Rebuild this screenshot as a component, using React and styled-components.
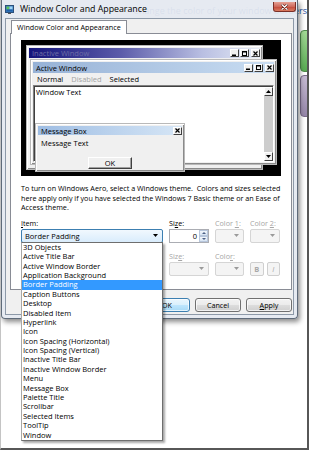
import React from 'react';
import styled, { createGlobalStyle } from 'styled-components';

const UI = `"Open Sans", "Noto Sans", "DejaVu Sans", sans-serif`;

const ITEMS = [
  '3D Objects',
  'Active Title Bar',
  'Active Window Border',
  'Application Background',
  'Border Padding',
  'Caption Buttons',
  'Desktop',
  'Disabled Item',
  'Hyperlink',
  'Icon',
  'Icon Spacing (Horizontal)',
  'Icon Spacing (Vertical)',
  'Inactive Title Bar',
  'Inactive Window Border',
  'Menu',
  'Message Box',
  'Palette Title',
  'Scrollbar',
  'Selected Items',
  'ToolTip',
  'Window',
];

const GlobalStyle = createGlobalStyle`
  html, body {
    margin: 0;
    padding: 0;
    background: #ffffff;
  }
  body {
    font-family: ${UI};
    width: 312px;
    height: 452px;
    overflow: hidden;
    color: #000;
  }
  * {
    box-sizing: border-box;
  }
`;

/* picture frame round the screenshot */
const Frame = styled.div`
  position: relative;
  width: 309px;
  height: 450px;
  overflow: hidden;
  background: #ffffff;
  border-left: 1px solid #c4c4c4;
  border-right: 2px solid #575757;
  border-bottom: 2px solid #575757;
`;

/* control panel page behind the dialog */
const Backdrop = styled.div`
  display: flex;
  flex-direction: column;
  padding-top: 5px;
`;

const PageHeading = styled.div`
  font-size: 9px;
  line-height: 12px;
  color: #1d4c9c;
  text-align: right;
  white-space: nowrap;
`;

const Swatches = styled.div`
  display: grid;
  grid-template-columns: 42px;
  grid-auto-rows: 42px;
  row-gap: 3px;
  margin-top: 13px;
  padding-left: 299px;
`;

const Swatch = styled.div`
  border-radius: 4px;
  border: 1px solid ${(p) => p.$edge};
  background: linear-gradient(160deg, ${(p) => p.$light}, ${(p) => p.$dark});
`;

/* the dialog window */
const Dialog = styled.div`
  position: absolute;
  top: 0;
  left: 0;
  width: 297px;
  display: flex;
  flex-direction: column;
  padding: 0 3px 3px;
  background: rgba(228, 233, 240, 0.94);
  border: 1px solid #5f6b7a;
  border-top: none;
  border-radius: 0 0 4px 4px;
  box-shadow: 2px 3px 5px rgba(0, 0, 0, 0.45);
`;

const TitleBar = styled.div`
  height: 18px;
  display: flex;
  align-items: center;
`;

const TitleIcon = styled.svg`
  width: 9px;
  height: 9px;
  margin-right: 6px;
  flex: none;
`;

const TitleText = styled.div`
  font-size: 8.8px;
  color: #000;
  white-space: nowrap;
`;

const CloseButton = styled.div`
  align-self: flex-start;
  margin: 2px -2px 0 auto;
  width: 23px;
  height: 10px;
  border: 1px solid #7b2f27;
  border-top: none;
  border-radius: 0 0 3px 3px;
  background: linear-gradient(#e6a195, #cf6a5c 50%, #c2483a 51%, #d97a60);
  display: flex;
  align-items: center;
  justify-content: center;
`;

const Client = styled.div`
  background: #f0f0f0;
  border: 1px solid #8d99a8;
  padding: 1px 1px 2px 4px;
  display: flex;
  flex-direction: column;
`;

const TabStrip = styled.div`
  display: flex;
  padding-left: 1px;
`;

const Tab = styled.div`
  position: relative;
  z-index: 1;
  height: 14px;
  margin-bottom: -1px;
  padding: 0 5px;
  border: 1px solid #898c95;
  border-bottom: none;
  background: #ffffff;
  font-size: 7.2px;
  line-height: 13px;
  white-space: nowrap;
`;

const Panel = styled.div`
  border: 1px solid #898c95;
  background: #ffffff;
  padding: 6px 10px 13px;
`;

/* appearance preview: windows on a black desktop */
const Preview = styled.div`
  position: relative;
  height: 136px;
  background: #000000;
`;

const PreviewWindow = styled.div`
  position: absolute;
  display: flex;
  flex-direction: column;
  padding: 2px;
  background: #f0f0f0;
  border: 1px solid #b9b9b9;
  box-shadow: inset 1px 1px 0 #ffffff, inset -1px -1px 0 #8a8a8a;
`;

const InactiveWindow = styled(PreviewWindow)`
  left: 5px;
  top: 5px;
  width: 237px;
  height: 125px;
`;

const ActiveWindow = styled(PreviewWindow)`
  left: 9px;
  top: 19px;
  width: 247px;
  height: 106px;
`;

const MessageWindow = styled(PreviewWindow)`
  left: 14px;
  top: 83px;
  width: 150px;
  height: 49px;
`;

const Caption = styled.div`
  height: ${(p) => p.$h}px;
  flex: none;
  display: flex;
  align-items: center;
  padding-left: 3px;
  background: ${(p) => p.$bg};
  color: ${(p) => p.$color};
  font-size: 7.5px;
  white-space: nowrap;
`;

const CapButtons = styled.div`
  margin-left: auto;
  display: flex;
  gap: 1px;
`;

const CapButton = styled.div`
  width: 9px;
  height: 8px;
  margin-left: ${(p) => (p.$gap ? 1 : 0)}px;
  background: #f0f0f0;
  border: 1px solid;
  border-color: #ffffff #404040 #404040 #ffffff;
  display: flex;
  align-items: center;
  justify-content: center;
`;

const MenuBar = styled.div`
  height: 12px;
  flex: none;
  display: flex;
  align-items: center;
  font-size: 7.5px;
`;

const MenuItem = styled.span`
  padding: 0 4px;
  color: ${(p) => (p.$disabled ? '#a3a3a3' : '#000')};
`;

const TextArea = styled.div`
  flex: 1;
  display: flex;
  background: #ffffff;
  border: 1px solid;
  border-color: #808080 #ffffff #ffffff #808080;
  box-shadow: inset 1px 1px 0 #404040;
`;

const TextBody = styled.div`
  flex: 1;
  padding: 2px 2px;
  font-size: 7.5px;
  line-height: 9px;
`;

const ScrollBar = styled.div`
  width: 9px;
  margin: 1px 0 0;
  display: flex;
  flex-direction: column;
  justify-content: space-between;
  background: #cdcdcd;
`;

const ScrollButton = styled(CapButton)`
  height: 9px;
`;

const MessageBody = styled.div`
  flex: 1;
  display: flex;
  flex-direction: column;
  padding: 4px 3px 0;
  font-size: 7.5px;
`;

const MessageText = styled.div`
  line-height: 8px;
`;

const ClassicButton = styled.div`
  align-self: center;
  width: 44px;
  height: 12px;
  margin-top: 10px;
  background: #f0f0f0;
  border: 1px solid;
  border-color: #ffffff #404040 #404040 #ffffff;
  box-shadow: inset -1px -1px 0 #a0a0a0;
  text-align: center;
  font-size: 7.5px;
  line-height: 10px;
`;

/* text and controls under the preview */
const Note = styled.p`
  margin: 8px 0 0;
  font-size: 7.2px;
  line-height: 9.6px;
  white-space: nowrap;
`;

const Fields = styled.div`
  margin-top: 5px;
  display: grid;
  grid-template-columns: 142px 40px 29px 30px;
  column-gap: 6px;
  row-gap: 8px;
`;

const Field = styled.div`
  position: relative;
  display: flex;
  flex-direction: column;
`;

const Label = styled.div`
  height: 10px;
  margin-bottom: 1px;
  font-size: 7.2px;
  line-height: 10px;
  white-space: nowrap;
  color: ${(p) => (p.$disabled ? '#a6a6a6' : '#000')};
`;

const Key = styled.span`
  text-decoration: underline;
`;

const Combo = styled.div`
  height: 14px;
  display: flex;
  align-items: center;
  padding: 0 4px 0 3px;
  border-radius: 2px;
  font-size: 7.5px;
  white-space: nowrap;
  border: 1px solid ${(p) => (p.$active ? '#3c7fb1' : '#d5d5d5')};
  background: ${(p) =>
    p.$active ? 'linear-gradient(#f1f8fe, #d9ecfc)' : '#f4f4f4'};
`;

const Arrow = styled.svg`
  margin-left: auto;
  width: 5px;
  height: 3px;
  flex: none;
`;

const Spinner = styled.div`
  height: 14px;
  display: flex;
  border: 1px solid #abadb3;
  background: #ffffff;
`;

const SpinValue = styled.div`
  flex: 1;
  text-align: right;
  padding-right: 2px;
  font-size: 7.5px;
  line-height: 12px;
`;

const SpinButtons = styled.div`
  width: 9px;
  display: flex;
  flex-direction: column;
`;

const SpinButton = styled.div`
  flex: 1;
  display: flex;
  align-items: center;
  justify-content: center;
  border: 1px solid #b7c6dc;
  background: linear-gradient(#f3f7fc, #d7e4f3);
`;

const StyleButtons = styled.div`
  display: flex;
  gap: 3px;
  margin-top: 11px;
`;

const StyleButton = styled.div`
  width: 14px;
  height: 14px;
  border: 1px solid #cfcfcf;
  border-radius: 2px;
  background: #f4f4f4;
  color: #a8a8a8;
  font-size: 7.5px;
  line-height: 12px;
  text-align: center;
  font-weight: ${(p) => (p.$bold ? 700 : 400)};
  font-style: ${(p) => (p.$italic ? 'italic' : 'normal')};
`;

/* open drop-down of the Item combo */
const DropList = styled.div`
  position: absolute;
  z-index: 10;
  top: calc(100% - 1px);
  left: 0;
  width: 142px;
  background: #ffffff;
  border: 1px solid #6e6e6e;
  border-left-color: #a8a8a8;
  box-shadow: 2px 2px 2px rgba(0, 0, 0, 0.35);
`;

const DropItem = styled.div`
  height: 9.4px;
  padding-left: 1px;
  font-size: 7.5px;
  line-height: 9.4px;
  white-space: nowrap;
  background: ${(p) => (p.$selected ? '#3399ff' : 'transparent')};
  color: ${(p) => (p.$selected ? '#ffffff' : '#000')};
`;

const ButtonRow = styled.div`
  margin-top: 8px;
  display: flex;
  justify-content: flex-end;
  gap: 5px;
`;

const DialogButton = styled.div`
  width: 46px;
  height: 14px;
  border-radius: 3px;
  border: 1px solid ${(p) => (p.$focus ? '#3c7fb1' : '#707070')};
  background: ${(p) =>
    p.$focus
      ? 'linear-gradient(#eaf6fd, #d9f0fc 50%, #bee6fd 51%, #a7d9f5)'
      : 'linear-gradient(#f2f2f2, #ebebeb 50%, #dddddd 51%, #cfcfcf)'};
  box-shadow: inset 0 0 0 1px rgba(255, 255, 255, 0.7);
  font-size: 7.2px;
  line-height: 12px;
  text-align: center;
`;

const DownArrow = ({ color = '#000' }) => (
  <Arrow viewBox="0 0 5 3">
    <path d="M0 0h5L2.5 3z" fill={color} />
  </Arrow>
);

const Glyph = ({ kind }) => {
  if (kind === 'min') {
    return (
      <svg width="5" height="5" viewBox="0 0 5 5">
        <rect x="0" y="3.5" width="4" height="1.5" fill="#000" />
      </svg>
    );
  }
  if (kind === 'max') {
    return (
      <svg width="5" height="5" viewBox="0 0 5 5">
        <rect x="0.5" y="0.5" width="4" height="4" fill="none" stroke="#000" strokeWidth="1" />
        <rect x="0" y="0" width="5" height="1.5" fill="#000" />
      </svg>
    );
  }
  if (kind === 'up' || kind === 'down') {
    return (
      <svg width="5" height="3" viewBox="0 0 5 3">
        <path d={kind === 'up' ? 'M0 3h5L2.5 0z' : 'M0 0h5L2.5 3z'} fill="#000" />
      </svg>
    );
  }
  return (
    <svg width="5" height="5" viewBox="0 0 5 5">
      <path d="M0.5 0.5l4 4M4.5 0.5l-4 4" stroke="#000" strokeWidth="1.2" />
    </svg>
  );
};

const CaptionButtons = () => (
  <CapButtons>
    <CapButton>
      <Glyph kind="min" />
    </CapButton>
    <CapButton>
      <Glyph kind="max" />
    </CapButton>
    <CapButton $gap>
      <Glyph kind="close" />
    </CapButton>
  </CapButtons>
);

const SpinArrow = ({ up }) => (
  <svg width="4" height="2" viewBox="0 0 4 2">
    <path d={up ? 'M0 2h4L2 0z' : 'M0 0h4L2 2z'} fill="#4d6185" />
  </svg>
);

const App = () => {
  return (
    <>
      <GlobalStyle />
      <Frame>
        <Backdrop>
          <PageHeading>Change the color of your window borders</PageHeading>
          <Swatches>
            <Swatch $light="#a6dc98" $dark="#3f9b3c" $edge="#4d8a4a" />
            <Swatch $light="#c9bdd6" $dark="#85759a" $edge="#7b6c8c" />
          </Swatches>
        </Backdrop>

        <Dialog>
          <TitleBar>
            <TitleIcon viewBox="0 0 9 9">
              <rect x="0.5" y="0.5" width="8" height="7" fill="#3d7fc1" stroke="#2c4f7a" />
              <rect x="1.5" y="1.5" width="3" height="3" fill="#5fc45a" />
              <rect x="4.5" y="1.5" width="3" height="3" fill="#9fd4f6" />
              <rect x="1.5" y="4.5" width="6" height="2" fill="#1f5fa8" />
              <rect x="3" y="8" width="3" height="1" fill="#555" />
            </TitleIcon>
            <TitleText>Window Color and Appearance</TitleText>
            <CloseButton>
              <svg width="7" height="6" viewBox="0 0 7 6">
                <path
                  d="M1 0.8l5 4.4M6 0.8l-5 4.4"
                  stroke="#5a1c16"
                  strokeWidth="2.4"
                  strokeLinecap="round"
                />
                <path
                  d="M1 0.8l5 4.4M6 0.8l-5 4.4"
                  stroke="#ffffff"
                  strokeWidth="1.3"
                  strokeLinecap="round"
                />
              </svg>
            </CloseButton>
          </TitleBar>

          <Client>
            <TabStrip>
              <Tab>Window Color and Appearance</Tab>
            </TabStrip>
            <Panel>
              <Preview>
                <InactiveWindow>
                  <Caption
                    $h={10}
                    $bg="linear-gradient(90deg, #13137a, #5c5caa 40%, #b9bfe2 75%, #e6ecf6)"
                    $color="#6e6ea6"
                  >
                    Inactive Window
                    <CaptionButtons />
                  </Caption>
                </InactiveWindow>

                <ActiveWindow>
                  <Caption
                    $h={11}
                    $bg="linear-gradient(90deg, #97b2d6, #c9ddf2)"
                    $color="#000"
                  >
                    Active Window
                    <CaptionButtons />
                  </Caption>
                  <MenuBar>
                    <MenuItem>Normal</MenuItem>
                    <MenuItem $disabled>Disabled</MenuItem>
                    <MenuItem>Selected</MenuItem>
                  </MenuBar>
                  <TextArea>
                    <TextBody>Window Text</TextBody>
                    <ScrollBar>
                      <ScrollButton>
                        <Glyph kind="up" />
                      </ScrollButton>
                      <ScrollButton>
                        <Glyph kind="down" />
                      </ScrollButton>
                    </ScrollBar>
                  </TextArea>
                </ActiveWindow>

                <MessageWindow>
                  <Caption
                    $h={9}
                    $bg="linear-gradient(90deg, #9ebde3, #d6e6f6)"
                    $color="#000"
                  >
                    Message Box
                    <CapButtons>
                      <CapButton>
                        <Glyph kind="close" />
                      </CapButton>
                    </CapButtons>
                  </Caption>
                  <MessageBody>
                    <MessageText>Message Text</MessageText>
                    <ClassicButton>OK</ClassicButton>
                  </MessageBody>
                </MessageWindow>
              </Preview>

              <Note>
                To turn on Windows Aero, select a Windows theme.&nbsp; Colors and sizes selected
                <br />
                here apply only if you have selected the Windows 7 Basic theme or an Ease of
                <br />
                Access theme.
              </Note>

              <Fields>
                <Field>
                  <Label>
                    <Key>I</Key>tem:
                  </Label>
                  <Combo $active>
                    Border Padding
                    <DownArrow />
                  </Combo>
                  <DropList>
                    {ITEMS.map((item) => (
                      <DropItem key={item} $selected={item === 'Border Padding'}>
                        {item}
                      </DropItem>
                    ))}
                  </DropList>
                </Field>
                <Field>
                  <Label>
                    Si<Key>z</Key>e:
                  </Label>
                  <Spinner>
                    <SpinValue>0</SpinValue>
                    <SpinButtons>
                      <SpinButton>
                        <SpinArrow up />
                      </SpinButton>
                      <SpinButton>
                        <SpinArrow />
                      </SpinButton>
                    </SpinButtons>
                  </Spinner>
                </Field>
                <Field>
                  <Label $disabled>
                    Color <Key>1</Key>:
                  </Label>
                  <Combo>
                    <DownArrow color="#9a9a9a" />
                  </Combo>
                </Field>
                <Field>
                  <Label $disabled>
                    Color <Key>2</Key>:
                  </Label>
                  <Combo>
                    <DownArrow color="#9a9a9a" />
                  </Combo>
                </Field>

                {/* font field sits under the open list */}
                <Field />
                <Field>
                  <Label $disabled>
                    Siz<Key>e</Key>:
                  </Label>
                  <Combo>
                    <DownArrow color="#9a9a9a" />
                  </Combo>
                </Field>
                <Field>
                  <Label $disabled>
                    Colo<Key>r</Key>:
                  </Label>
                  <Combo>
                    <DownArrow color="#9a9a9a" />
                  </Combo>
                </Field>
                <Field>
                  <StyleButtons>
                    <StyleButton $bold>B</StyleButton>
                    <StyleButton $italic>I</StyleButton>
                  </StyleButtons>
                </Field>
              </Fields>
            </Panel>

            <ButtonRow>
              <DialogButton $focus>OK</DialogButton>
              <DialogButton>Cancel</DialogButton>
              <DialogButton>
                <Key>A</Key>pply
              </DialogButton>
            </ButtonRow>
          </Client>
        </Dialog>
      </Frame>
    </>
  );
};

export default App;
